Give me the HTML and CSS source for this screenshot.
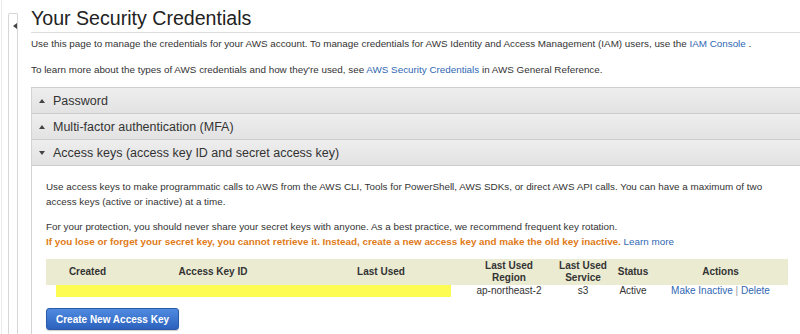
FILE: index.html
```html
<!DOCTYPE html>
<html>
<head>
<meta charset="utf-8">
<link rel="stylesheet" href="styles.css">
</head>
<body>
<div class="page">
  <aside class="rail">
    <div class="rail-line"></div>
    <div class="tab"><span class="tab-arrow"></span></div>
  </aside>
  <main class="main">
    <h1 class="title">Your Security Credentials</h1>
    <p class="intro">Use this page to manage the credentials for your AWS account. To manage credentials for AWS Identity and Access Management (IAM) users, use the <a class="link" href="#">IAM Console</a> .</p>
    <p class="intro">To learn more about the types of AWS credentials and how they're used, see <a class="link" href="#">AWS Security Credentials</a> in AWS General Reference.</p>
    <div class="accordion">
      <div class="acc-head"><span class="caret caret-up"></span>Password</div>
      <div class="acc-head"><span class="caret caret-up"></span>Multi-factor authentication (MFA)</div>
      <div class="acc-head"><span class="caret caret-down"></span>Access keys (access key ID and secret access key)</div>
      <div class="acc-body">
        <p class="body-text">Use access keys to make programmatic calls to AWS from the AWS CLI, Tools for PowerShell, AWS SDKs, or direct AWS API calls. You can have a maximum of two access keys (active or inactive) at a time.</p>
        <p class="body-text">For your protection, you should never share your secret keys with anyone. As a best practice, we recommend frequent key rotation.<br><span class="warn">If you lose or forget your secret key, you cannot retrieve it. Instead, create a new access key and make the old key inactive.</span> <a class="link" href="#">Learn more</a></p>
        <table class="keys">
          <colgroup>
            <col class="c-created"><col class="c-id"><col class="c-used"><col class="c-region"><col class="c-service"><col class="c-status"><col class="c-actions">
          </colgroup>
          <thead>
            <tr>
              <th>Created</th>
              <th>Access Key ID</th>
              <th>Last Used</th>
              <th>Last Used<br>Region</th>
              <th>Last Used<br>Service</th>
              <th>Status</th>
              <th>Actions</th>
            </tr>
          </thead>
          <tbody>
            <tr>
              <td colspan="3" class="redact-cell"><div class="redact"></div></td>
              <td>ap-northeast-2</td>
              <td>s3</td>
              <td>Active</td>
              <td><a class="link" href="#">Make Inactive</a> <span class="sep">|</span> <a class="link" href="#">Delete</a></td>
            </tr>
          </tbody>
        </table>
        <button class="btn" type="button">Create New Access Key</button>
      </div>
    </div>
  </main>
</div>
</body>
</html>
```

FILE: styles.css
```css
html, body {
  margin: 0;
  padding: 0;
  background: #fff;
  overflow: hidden;
}
body {
  font-family: "Liberation Sans", Arial, sans-serif;
  color: #333;
  width: 800px;
  height: 334px;
}
.page {
  display: flex;
  height: 334px;
}
.rail {
  width: 31px;
  flex: none;
  position: relative;
}
.rail-line {
  position: absolute;
  left: 1px;
  top: 0;
  bottom: 0;
  border-left: 1px solid #ececec;
}
.tab {
  position: absolute;
  left: 8px;
  top: 13px;
  bottom: 0;
  width: 8px;
  border-left: 1px solid #d6d6d6;
  border-right: 1px solid #d6d6d6;
  border-top: 1px solid #d6d6d6;
  border-top-right-radius: 2px;
  border-top-left-radius: 2px;
}
.tab-arrow {
  position: absolute;
  left: 4px;
  top: 9px;
  width: 0;
  height: 0;
  border-top: 3px solid transparent;
  border-bottom: 3px solid transparent;
  border-right: 4px solid #444;
}
.main {
  flex: 1;
  min-width: 0;
}
.title {
  margin: 0;
  padding: 6px 0 2px;
  font-size: 19.6px;
  line-height: 24px;
  font-weight: normal;
  color: #222;
  border-bottom: 1px solid #ddd;
}
.intro {
  margin: 4px 0 12px;
  font-size: 9.85px;
  line-height: 14px;
  color: #333;
  white-space: nowrap;
}
.intro + .intro {
  margin-bottom: 10px;
}
.link {
  color: #2f67b3;
  text-decoration: none;
}
.accordion {
  border-left: 1px solid #d3d3d3;
  border-top: 1px solid #cfcfcf;
}
.acc-head {
  height: 25px;
  display: flex;
  align-items: center;
  font-size: 12.5px;
  color: #333;
  background: linear-gradient(#eeeeee, #e2e2e2);
  border-bottom: 1px solid #cccccc;
  padding-left: 7px;
}
.caret {
  width: 0;
  height: 0;
  margin-right: 8px;
  border-left: 3px solid transparent;
  border-right: 3px solid transparent;
}
.caret-up {
  border-bottom: 4px solid #444;
}
.caret-down {
  border-top: 4px solid #444;
}
.acc-body {
  padding: 13px 0 6px 14px;
}
.body-text {
  margin: 0 0 10px;
  font-size: 9.85px;
  line-height: 15px;
  color: #333;
  max-width: 730px;
}
.warn {
  color: #e07a16;
  font-weight: bold;
}
.keys {
  width: 742px;
  table-layout: fixed;
  border-collapse: collapse;
  margin-top: 10px;
  font-size: 10px;
}
.c-created { width: 83px; }
.c-id { width: 168px; }
.c-used { width: 168px; }
.c-region { width: 88px; }
.c-service { width: 60px; }
.c-status { width: 40px; }
.c-actions { width: 135px; }
.keys th {
  background: #ebebd2;
  height: 26px;
  padding: 0;
  font-weight: bold;
  line-height: 12px;
  color: #333;
  text-align: center;
}
.keys td {
  padding: 0;
  height: 12px;
  line-height: 12px;
  text-align: center;
  color: #333;
}
.redact-cell {
  padding: 0;
}
.redact {
  margin-left: 10px;
  width: 395px;
  height: 12px;
  background: #fdfc52;
}
.sep {
  color: #999;
}
.btn {
  display: block;
  margin-top: 11px;
  width: 133px;
  height: 22px;
  padding: 0;
  border: 1px solid #2b5aa6;
  border-radius: 3px;
  background: linear-gradient(#4f8ae0, #2c62bd);
  color: #fff;
  font-family: "Liberation Sans", Arial, sans-serif;
  font-size: 10px;
  font-weight: bold;
  box-shadow: 0 1px 1px rgba(0,0,0,0.2);
}
```
